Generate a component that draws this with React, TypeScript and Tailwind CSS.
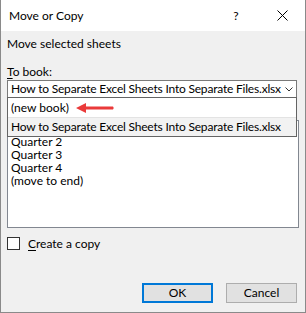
import React from 'react'

const font = { fontFamily: 'Lato, "Noto Sans", sans-serif' }

function ArrowLeft() {
  return (
    <svg width="40" height="12" viewBox="0 0 40 12" className="block">
      <path d="M1 6 L11 1 L11 4.5 L38 4.5 Q39.5 6 38 7.5 L11 7.5 L11 11 Z" fill="#ea3a3a" />
    </svg>
  )
}

export default function App() {
  const sheets = ['Quarter 2', 'Quarter 3', 'Quarter 4', '(move to end)']

  return (
    <div
      className="relative w-[306px] h-[313px] bg-[#f0f0f0] text-black text-[12px] leading-[16px] border-r border-b border-l border-[#8a8a8a] flex flex-col overflow-hidden"
      style={font}
    >
      {/* Title bar */}
      <div className="h-[31px] bg-white flex items-center pl-[8px] shrink-0">
        <span className="flex-1">Move or Copy</span>
        <span className="w-[10px] text-center mr-[36px]">?</span>
        <svg width="11" height="11" viewBox="0 0 11 11" className="mr-[17px]">
          <path d="M0.5 0.5 L10.5 10.5 M10.5 0.5 L0.5 10.5" stroke="#000" strokeWidth="1" />
        </svg>
      </div>

      {/* Body */}
      <div className="flex flex-col px-[6px] flex-1">
        <div className="mt-[5px]">Move selected sheets</div>
        <div className="mt-[12px]">
          <span className="underline underline-offset-2">T</span>o book:
        </div>
        <div className="h-[18px] w-[290px] bg-white border border-[#7a7a7a] flex items-center pl-[3px] pr-[2px]">
          <span className="flex-1 whitespace-nowrap overflow-hidden tracking-[-0.2px]">How to Separate Excel Sheets Into Separate Files.xlsx</span>
          <svg width="8" height="5" viewBox="0 0 8 5" className="mr-[1px]">
            <path d="M0.5 0.5 L4 4 L7.5 0.5" stroke="#333" fill="none" strokeWidth="1" />
          </svg>
        </div>

        {/* "Before sheet:" label and first row sit under the open dropdown */}
        <div className="mt-[6px] h-[16px]" />
        <div className="h-[108px] w-[292px] bg-white border border-[#828790] pt-[14px] pl-[3px] leading-[13px]">
          {sheets.map(s => (
            <div key={s}>{s}</div>
          ))}
        </div>

        <label className="flex items-center mt-[9px] h-[13px]">
          <span className="w-[13px] h-[13px] border border-[#333] bg-white" />
          <span className="ml-[8px]">
            <span className="underline underline-offset-2">C</span>reate a copy
          </span>
        </label>

        <div className="flex justify-end gap-[13px] mt-auto mb-[9px] mr-[2px]">
          <button className="w-[71px] h-[20px] bg-[#e1e1e1] border-2 border-[#0078d7] leading-none">OK</button>
          <button className="w-[71px] h-[20px] bg-[#e1e1e1] border border-[#adadad] leading-none">Cancel</button>
        </div>
      </div>

      {/* Open dropdown list */}
      <div className="absolute left-[6px] top-[97px] w-[290px] h-[40px] bg-white border border-[#646464] flex flex-col">
        <div className="h-[19px] flex items-center pl-[3px]">
          <span>(new book)</span>
          <span className="ml-[6px]"><ArrowLeft /></span>
        </div>
        <div className="flex-1 flex items-center pl-[3px] bg-[#f2f2f2] border-t border-[#e3e3e3] whitespace-nowrap tracking-[-0.2px]">
          How to Separate Excel Sheets Into Separate Files.xlsx
        </div>
      </div>
    </div>
  )
}
